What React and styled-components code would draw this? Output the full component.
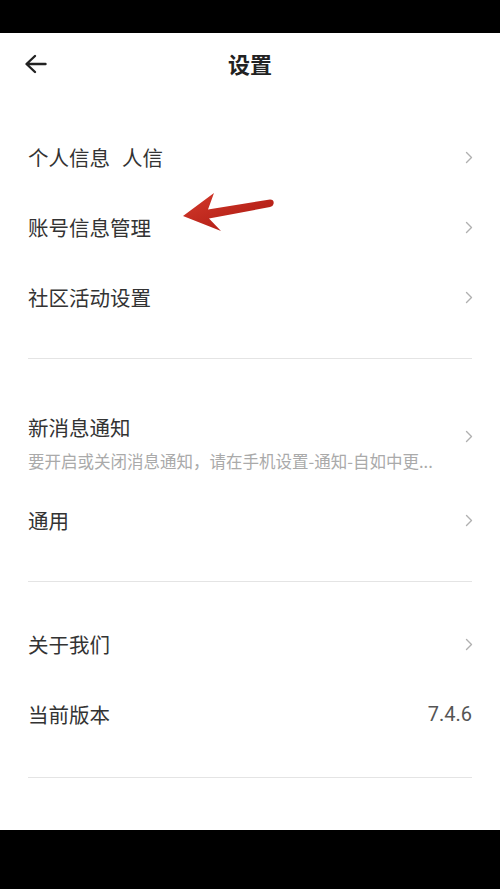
import React from 'react';
import styled, { createGlobalStyle } from 'styled-components';

const GlobalStyle = createGlobalStyle`
  html, body {
    margin: 0;
    padding: 0;
    background: #000;
  }
  body {
    font-family: "Noto Sans CJK SC", "Noto Sans", sans-serif;
  }
`;

const Phone = styled.div`
  position: relative;
  width: 500px;
  height: 889px;
  display: flex;
  flex-direction: column;
  background: #000;
  overflow: hidden;
`;

const StatusBar = styled.div`
  height: 33px;
  background: #000;
  flex-shrink: 0;
`;

const NavBar = styled.div`
  height: 59px;
  background: #000;
  flex-shrink: 0;
`;

const Screen = styled.div`
  flex: 1;
  background: #fff;
  display: flex;
  flex-direction: column;
`;

const Header = styled.div`
  height: 64px;
  display: grid;
  grid-template-columns: 60px 1fr 60px;
  align-items: center;
`;

const BackButton = styled.button`
  border: none;
  background: none;
  padding: 0 0 2px 24px;
  display: flex;
  align-items: center;
  cursor: pointer;
`;

const Title = styled.h1`
  margin: 0 0 4px;
  text-align: center;
  font-size: 22px;
  font-weight: 700;
  color: #222;
`;

const Section = styled.div`
  display: flex;
  flex-direction: column;
  padding: ${p => p.$top || 26}px 0 ${p => p.$bottom || 26}px;
`;

const Divider = styled.div`
  height: 1px;
  margin: 0 28px;
  background: #e4e4e4;
`;

const Row = styled.div`
  height: ${p => p.$height || 70}px;
  display: flex;
  align-items: center;
  justify-content: space-between;
  padding: 0 27px 0 28px;
`;

const TextBlock = styled.div`
  display: flex;
  flex-direction: column;
  gap: 9px;
  padding-top: ${p => p.$shift || 0}px;
`;

const Label = styled.span`
  font-size: 20.5px;
  line-height: 28px;
  color: #333;
`;

const Ghost = styled.span`
  margin-left: 12px;
`;

const SubLabel = styled.span`
  font-size: 16.5px;
  line-height: 22px;
  color: #aaa;
  white-space: nowrap;
`;

const Value = styled.span`
  font-size: 20px;
  color: #555;
  font-family: "Roboto", "Noto Sans", sans-serif;
  padding-right: 1px;
`;

const Pointer = styled.svg`
  position: absolute;
  left: 180px;
  top: 188px;
  pointer-events: none;
`;

const Chevron = () => (
  <svg width="8" height="13" viewBox="0 0 8 13">
    <polyline points="1.5,1.5 6.5,6.5 1.5,11.5" fill="none" stroke="#b0b0b0" strokeWidth="1.4" strokeLinecap="round" strokeLinejoin="round" />
  </svg>
);

const BackArrow = () => (
  <svg width="23" height="20" viewBox="0 0 23 20">
    <path d="M21.5 10H3M11 2L2.5 10L11 18" fill="none" stroke="#222" strokeWidth="2.4" strokeLinecap="round" strokeLinejoin="round" />
  </svg>
);

const Item = ({ label, value }) => (
  <Row>
    <Label>{label}</Label>
    {value ? <Value>{value}</Value> : <Chevron />}
  </Row>
);

export default function App() {
  return (
    <Phone>
      <GlobalStyle />
      <StatusBar />
      <Screen>
        <Header>
          <BackButton aria-label="返回">
            <BackArrow />
          </BackButton>
          <Title>设置</Title>
          <span />
        </Header>

        <Section $top={25}>
          <Item label={<>个人信息<Ghost>人信</Ghost></>} />
          <Item label="账号信息管理" />
          <Item label="社区活动设置" />
        </Section>
        <Divider />

        <Section $top={28}>
          <Row $height={98}>
            <TextBlock $shift={12}>
              <Label>新消息通知</Label>
              <SubLabel>要开启或关闭消息通知，请在手机设置-通知-自如中更...</SubLabel>
            </TextBlock>
            <Chevron />
          </Row>
          <Item label="通用" />
        </Section>
        <Divider />

        <Section $top={27} $bottom={28}>
          <Item label="关于我们" />
          <Item label="当前版本" value="7.4.6" />
        </Section>
        <Divider />
      </Screen>
      <NavBar />

      <Pointer width="96" height="48" viewBox="180 188 96 48">
        <defs>
          <linearGradient id="redInk" x1="0" y1="0" x2="1" y2="1">
            <stop offset="0" stopColor="#d43a2c" />
            <stop offset="1" stopColor="#a8160f" />
          </linearGradient>
        </defs>
        <path
          d="M183 216 L214 193 L208 209.5 L270 199.5 Q274.5 199.5 273.5 204 Q273 206.5 270 207 L209 218.5 L221 231 Z"
          fill="url(#redInk)"
        />
      </Pointer>
    </Phone>
  );
}
